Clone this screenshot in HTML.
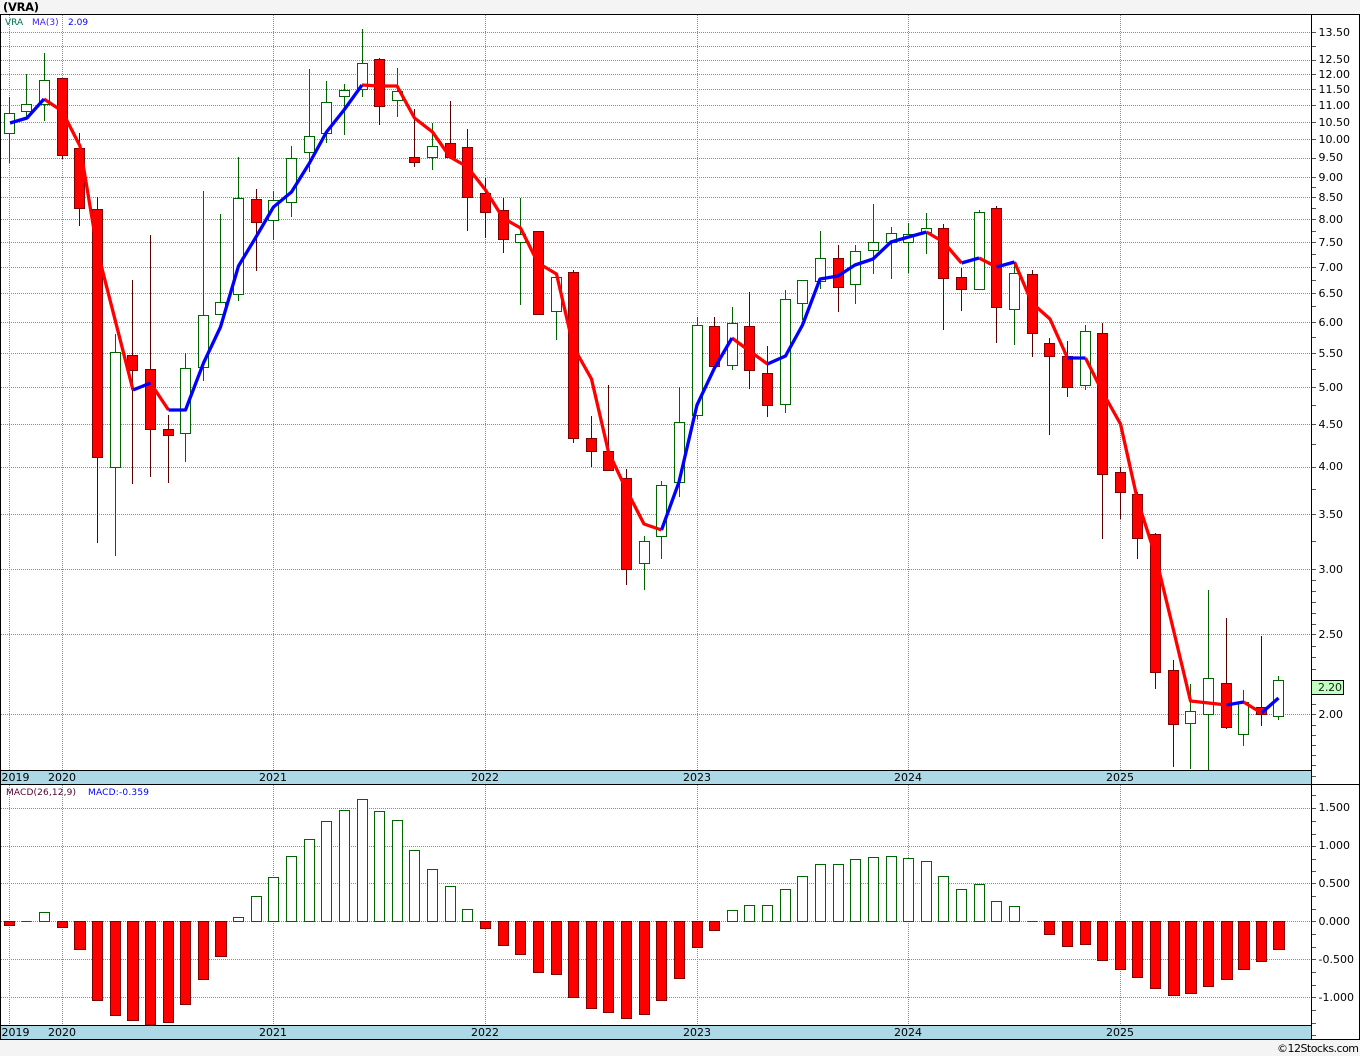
<!DOCTYPE html>
<html lang="en"><head><meta charset="utf-8"><title>(VRA)</title>
<style>
html,body{margin:0;padding:0;background:#fff}
svg{display:block}
text{font-family:"DejaVu Sans","Liberation Sans",sans-serif}
</style></head><body>
<svg xmlns="http://www.w3.org/2000/svg" width="1360" height="1056" viewBox="0 0 1360 1056">
<rect width="1360" height="1056" fill="#fff"/>
<rect width="1360" height="14" fill="#f4f4f4"/>
<rect y="1040" width="1360" height="16" fill="#f4f4f4"/>
<rect x="0" y="771" width="1311" height="13" fill="#add8e6"/>
<rect x="0" y="1026" width="1311" height="13" fill="#add8e6"/>

<g shape-rendering="crispEdges" fill="none" stroke="#8c8c8c" stroke-width="1" stroke-dasharray="1 1">
<path d="M1 32.5H1311M1 46.5H1311M1 60.5H1311M1 74.5H1311M1 89.5H1311M1 105.5H1311M1 122.5H1311M1 139.5H1311M1 158.5H1311M1 177.5H1311M1 197.5H1311M1 219.5H1311M1 242.5H1311M1 267.5H1311M1 293.5H1311M1 322.5H1311M1 353.5H1311M1 387.5H1311M1 424.5H1311M1 467.5H1311M1 514.5H1311M1 569.5H1311M1 634.5H1311M1 714.5H1311"/>
<path d="M1 808.5H1311M1 846.5H1311M1 883.5H1311M1 921.5H1311M1 959.5H1311M1 997.5H1311"/>
<path d="M9.5 15V770M62.5 15V770M273.5 15V770M485.5 15V770M697.5 15V770M908.5 15V770M1120.5 15V770"/>
<path d="M9.5 785V1025M62.5 785V1025M273.5 785V1025M485.5 785V1025M697.5 785V1025M908.5 785V1025M1120.5 785V1025"/>
</g>

<!-- wicks -->
<g shape-rendering="crispEdges" fill="none" stroke-width="1">
<path stroke="#006400" d="M9.5 97V163M26.5 74V117M44.5 53V121M115.5 334V556M185.5 353V462M203.5 191V381M220.5 214V302M238.5 157V301M273.5 191V240M291.5 146V217M309.5 69V172M326.5 81V143M344.5 84V135M362.5 29V97M397.5 68V117M432.5 123V170M520.5 198V305M556.5 277V340M644.5 536V590M661.5 481V559M679.5 387V497M697.5 317V419M732.5 307V370M785.5 290V413M802.5 303V320M820.5 231V289M855.5 245V304M873.5 204V274M891.5 227V279M908.5 223V273M926.5 213V254M979.5 210V290M1014.5 265V345M1085.5 325V390M1190.5 684V769M1208.5 590V770M1243.5 690V746M1278.5 676V720"/>
<path stroke="#5c0000" d="M62.5 78V159M79.5 133V226M97.5 197V543M132.5 280V484M150.5 235V477M168.5 415V483M256.5 189V271M379.5 58V125M414.5 109V167M450.5 101V159M467.5 129V231M485.5 178V238M503.5 198V253M573.5 270V443M591.5 416V467M608.5 385V470M626.5 469V585M714.5 317V326M749.5 292V389M767.5 346V417M838.5 245V312M943.5 224V330M961.5 268V311M996.5 206V343M1032.5 270V357M1049.5 338V435M1067.5 341V397M1102.5 323V539M1120.5 467V519M1137.5 492V559M1155.5 533V689M1173.5 660V767M1226.5 618V729M1261.5 636V726"/>
</g>

<!-- candle bodies -->
<g shape-rendering="crispEdges" stroke-width="1">
<path fill="#fff" stroke="#006400" d="M4.5 113.5h10v20h-10zM21.5 104.5h10v7h-10zM39.5 80.5h10v24h-10zM110.5 352.5h10v115h-10zM180.5 368.5h10v65h-10zM198.5 315.5h10v52h-10zM215.5 302.5h10v12h-10zM233.5 198.5h10v96h-10zM268.5 200.5h10v20h-10zM286.5 158.5h10v44h-10zM304.5 136.5h10v16h-10zM321.5 102.5h10v31h-10zM339.5 90.5h10v6h-10zM357.5 63.5h10v26h-10zM392.5 91.5h10v9h-10zM427.5 146.5h10v11h-10zM515.5 234.5h10v8h-10zM551.5 277.5h10v34h-10zM639.5 541.5h10v22h-10zM656.5 485.5h10v51h-10zM674.5 422.5h10v60h-10zM692.5 325.5h10v90h-10zM727.5 323.5h10v42h-10zM780.5 299.5h10v105h-10zM797.5 280.5h10v23h-10zM815.5 258.5h10v23h-10zM850.5 251.5h10v33h-10zM868.5 242.5h10v8h-10zM886.5 233.5h10v9h-10zM903.5 234.5h10v8h-10zM921.5 228.5h10v4h-10zM974.5 212.5h10v77h-10zM1009.5 273.5h10v36h-10zM1080.5 331.5h10v54h-10zM1185.5 711.5h10v12h-10zM1203.5 678.5h10v36h-10zM1238.5 702.5h10v32h-10zM1273.5 680.5h10v36h-10z"/>
<path fill="#f00" stroke="#800000" d="M57.5 78.5h10v77h-10zM74.5 148.5h10v60h-10zM92.5 209.5h10v248h-10zM127.5 355.5h10v15h-10zM145.5 369.5h10v60h-10zM163.5 429.5h10v6h-10zM251.5 199.5h10v23h-10zM374.5 59.5h10v47h-10zM409.5 157.5h10v5h-10zM445.5 143.5h10v14h-10zM462.5 147.5h10v50h-10zM480.5 193.5h10v19h-10zM498.5 210.5h10v29h-10zM533.5 231.5h10v83h-10zM568.5 272.5h10v166h-10zM586.5 438.5h10v13h-10zM603.5 451.5h10v19h-10zM621.5 478.5h10v91h-10zM709.5 326.5h10v40h-10zM744.5 326.5h10v44h-10zM762.5 373.5h10v32h-10zM833.5 258.5h10v29h-10zM938.5 228.5h10v50h-10zM956.5 277.5h10v12h-10zM991.5 208.5h10v99h-10zM1027.5 274.5h10v59h-10zM1044.5 343.5h10v13h-10zM1062.5 356.5h10v31h-10zM1097.5 333.5h10v141h-10zM1115.5 472.5h10v20h-10zM1132.5 494.5h10v44h-10zM1150.5 534.5h10v138h-10zM1168.5 670.5h10v54h-10zM1221.5 683.5h10v44h-10zM1256.5 707.5h10v7h-10z"/>
</g>

<!-- MA(3) -->
<g fill="none" stroke-width="3.3" stroke-linejoin="round" stroke-linecap="butt">
<g stroke="#f00">
<polyline points="44,99 62,111 80,146 97.5,251 133,390"/>
<polyline points="150.5,383 168.5,410"/>
<polyline points="362,85 379.5,86 397,86 414.5,118 432.5,132 450,157 467.5,167 485.5,190 503,218 520.5,228 538,263 556.5,274 573.5,347 591.5,379 608.5,452 626.5,490 644,524 661.5,530"/>
<polyline points="732,338 749.5,351 767.5,364"/>
<polyline points="926.5,232 943.5,242 961.5,263"/>
<polyline points="979,258 996.5,267"/>
<polyline points="1014.5,262 1032,303 1050,319 1067.5,358"/>
<polyline points="1085.5,358 1102.5,392 1120.5,424 1137.5,500 1155.5,556 1173,628 1190.5,701 1208.5,703 1226.5,705"/>
<polyline points="1243.5,702 1261.5,713"/>
</g>
<g stroke="#00f">
<polyline points="10,123 27,118 44,99"/>
<polyline points="133,390 150.5,383"/>
<polyline points="168.5,410 185.5,410 203.5,363 220.5,327 238.5,266 256,237 273.5,207 291.5,192 309.5,163 326.5,132 344,110 362,85"/>
<polyline points="661.5,530 679,482 697,405 714.5,368 732,338"/>
<polyline points="767.5,364 785.5,356 802.5,325 820,279 838,276 855,265 873,259 891,242 908.5,237 926.5,232"/>
<polyline points="961.5,263 979,258"/>
<polyline points="996.5,267 1014.5,262"/>
<polyline points="1067.5,358 1085.5,358"/>
<polyline points="1226.5,705 1243.5,702"/>
<polyline points="1261.5,713 1278.5,698"/>
</g>
</g>

<!-- MACD bars -->
<g shape-rendering="crispEdges" stroke-width="1">
<path fill="#fff" stroke="#006400" d="M21.5 921.5h10M39.5 921.5V912.5h10V921.5zM233.5 921.5V917.5h10V921.5zM251.5 921.5V896.5h10V921.5zM268.5 921.5V877.5h10V921.5zM286.5 921.5V856.5h10V921.5zM304.5 921.5V839.5h10V921.5zM321.5 921.5V821.5h10V921.5zM339.5 921.5V810.5h10V921.5zM357.5 921.5V799.5h10V921.5zM374.5 921.5V811.5h10V921.5zM392.5 921.5V820.5h10V921.5zM409.5 921.5V850.5h10V921.5zM427.5 921.5V869.5h10V921.5zM445.5 921.5V886.5h10V921.5zM462.5 921.5V909.5h10V921.5zM727.5 921.5V910.5h10V921.5zM744.5 921.5V905.5h10V921.5zM762.5 921.5V905.5h10V921.5zM780.5 921.5V889.5h10V921.5zM797.5 921.5V876.5h10V921.5zM815.5 921.5V864.5h10V921.5zM833.5 921.5V864.5h10V921.5zM850.5 921.5V859.5h10V921.5zM868.5 921.5V857.5h10V921.5zM886.5 921.5V856.5h10V921.5zM903.5 921.5V858.5h10V921.5zM921.5 921.5V861.5h10V921.5zM938.5 921.5V876.5h10V921.5zM956.5 921.5V889.5h10V921.5zM974.5 921.5V884.5h10V921.5zM991.5 921.5V901.5h10V921.5zM1009.5 921.5V906.5h10V921.5zM1027.5 921.5h10"/>
<path fill="#f00" stroke="#800000" d="M4.5 921.5V925.5h10V921.5zM57.5 921.5V927.5h10V921.5zM74.5 921.5V949.5h11V921.5zM92.5 921.5V1000.5h10V921.5zM110.5 921.5V1015.5h10V921.5zM127.5 921.5V1020.5h11V921.5zM145.5 921.5V1025h10V921.5zM163.5 921.5V1022.5h10V921.5zM180.5 921.5V1004.5h10V921.5zM198.5 921.5V979.5h10V921.5zM215.5 921.5V956.5h11V921.5zM480.5 921.5V928.5h10V921.5zM498.5 921.5V945.5h10V921.5zM515.5 921.5V954.5h10V921.5zM533.5 921.5V972.5h10V921.5zM551.5 921.5V974.5h10V921.5zM568.5 921.5V997.5h10V921.5zM586.5 921.5V1008.5h10V921.5zM603.5 921.5V1012.5h10V921.5zM621.5 921.5V1018.5h10V921.5zM639.5 921.5V1014.5h10V921.5zM656.5 921.5V1000.5h10V921.5zM674.5 921.5V978.5h10V921.5zM692.5 921.5V947.5h10V921.5zM709.5 921.5V930.5h10V921.5zM1044.5 921.5V934.5h10V921.5zM1062.5 921.5V946.5h10V921.5zM1080.5 921.5V944.5h10V921.5zM1097.5 921.5V960.5h10V921.5zM1115.5 921.5V969.5h10V921.5zM1132.5 921.5V977.5h10V921.5zM1150.5 921.5V988.5h10V921.5zM1168.5 921.5V995.5h11V921.5zM1185.5 921.5V993.5h11V921.5zM1203.5 921.5V986.5h10V921.5zM1221.5 921.5V979.5h11V921.5zM1238.5 921.5V969.5h11V921.5zM1256.5 921.5V961.5h10V921.5zM1273.5 921.5V949.5h11V921.5z"/>
</g>

<!-- frame -->
<g shape-rendering="crispEdges" stroke="#000" stroke-width="1" fill="none">
<path d="M0 14.5H1360M0 784.5H1360M0 1039.5H1360"/>
<path d="M0 770.5H1311M0 1025.5H1311"/>
<path d="M0.5 14V1040M1311.5 14V1040M1359.5 14V1040"/>
</g>
<g shape-rendering="crispEdges" stroke="#555" stroke-width="1" fill="none">
<path d="M1312 32.5h4M1312 46.5h4M1312 60.5h4M1312 74.5h4M1312 89.5h4M1312 105.5h4M1312 122.5h4M1312 139.5h4M1312 158.5h4M1312 177.5h4M1312 187.5h4M1312 197.5h4M1312 208.5h4M1312 219.5h4M1312 231.5h4M1312 242.5h4M1312 254.5h4M1312 267.5h4M1312 280.5h4M1312 293.5h4M1312 306.5h4M1312 322.5h4M1312 337.5h4M1312 353.5h4M1312 369.5h4M1312 387.5h4M1312 405.5h4M1312 424.5h4M1312 444.5h4M1312 467.5h4M1312 489.5h4M1312 514.5h4M1312 541.5h4M1312 569.5h4M1312 580.5h4M1312 591.5h4M1312 602.5h4M1312 613.5h4M1312 624.5h4M1312 634.5h4M1312 646.5h4M1312 657.5h4M1312 669.5h4M1312 704.5h4M1312 714.5h4M1312 725.5h4M1312 735.5h4M1312 745.5h4M1312 755.5h4M1312 765.5h4M1312 776.5h4"/>
<path d="M1312 795.5h4M1312 808.5h4M1312 821.5h4M1312 834.5h4M1312 846.5h4M1312 859.5h4M1312 871.5h4M1312 883.5h4M1312 896.5h4M1312 909.5h4M1312 921.5h4M1312 934.5h4M1312 947.5h4M1312 959.5h4M1312 972.5h4M1312 985.5h4M1312 997.5h4M1312 1010.5h4M1312 1023.5h4M1312 1035.5h4"/>
</g>

<rect x="1311.5" y="680.5" width="32" height="14" fill="#c0ffc0" stroke="#000" shape-rendering="crispEdges"/>

<!-- text -->
<text x="3" y="11" font-size="11.5" font-weight="700" fill="#000" textLength="36">(VRA)</text>
<text x="5" y="25" font-size="9" fill="#007050">VRA</text>
<text x="32" y="25" font-size="9" fill="#4020f0">MA(3)</text>
<text x="68" y="25" font-size="9" fill="#0000ff">2.09</text>
<text x="6" y="795" font-size="9" fill="#500030" textLength="70">MACD(26,12,9)</text>
<text x="88" y="795" font-size="9" fill="#0000ff" textLength="61">MACD:-0.359</text>

<g font-size="11" fill="#000" text-anchor="middle">
<text x="15.5" y="781">2019</text><text x="62" y="781">2020</text><text x="273" y="781">2021</text><text x="485" y="781">2022</text><text x="697" y="781">2023</text><text x="908" y="781">2024</text><text x="1120" y="781">2025</text>
<text x="15.5" y="1036">2019</text><text x="62" y="1036">2020</text><text x="273" y="1036">2021</text><text x="485" y="1036">2022</text><text x="697" y="1036">2023</text><text x="908" y="1036">2024</text><text x="1120" y="1036">2025</text>
</g>

<g font-size="11" fill="#000">
<text x="1318.5" y="36">13.50</text><text x="1318.5" y="63">12.50</text><text x="1318.5" y="78">12.00</text><text x="1318.5" y="93">11.50</text><text x="1318.5" y="109">11.00</text><text x="1318.5" y="126">10.50</text><text x="1318.5" y="143">10.00</text>
<text x="1318.5" y="161">9.50</text><text x="1318.5" y="181">9.00</text><text x="1318.5" y="201">8.50</text><text x="1318.5" y="223">8.00</text><text x="1318.5" y="246">7.50</text><text x="1318.5" y="271">7.00</text><text x="1318.5" y="297">6.50</text><text x="1318.5" y="326">6.00</text><text x="1318.5" y="357">5.50</text><text x="1318.5" y="391">5.00</text><text x="1318.5" y="428">4.50</text><text x="1318.5" y="470">4.00</text><text x="1318.5" y="518">3.50</text><text x="1318.5" y="573">3.00</text><text x="1318.5" y="638">2.50</text><text x="1318" y="691" fill="#222" textLength="24">2.20</text><text x="1318.5" y="718">2.00</text>
<text x="1318.5" y="811">1.500</text><text x="1318.5" y="849">1.000</text><text x="1318.5" y="887">0.500</text><text x="1318.5" y="925">0.000</text><text x="1318.5" y="963">-0.500</text><text x="1318.5" y="1001">-1.000</text>
<text x="1277" y="1052" textLength="82">©12Stocks.com</text>
</g>
</svg>
</body></html>
